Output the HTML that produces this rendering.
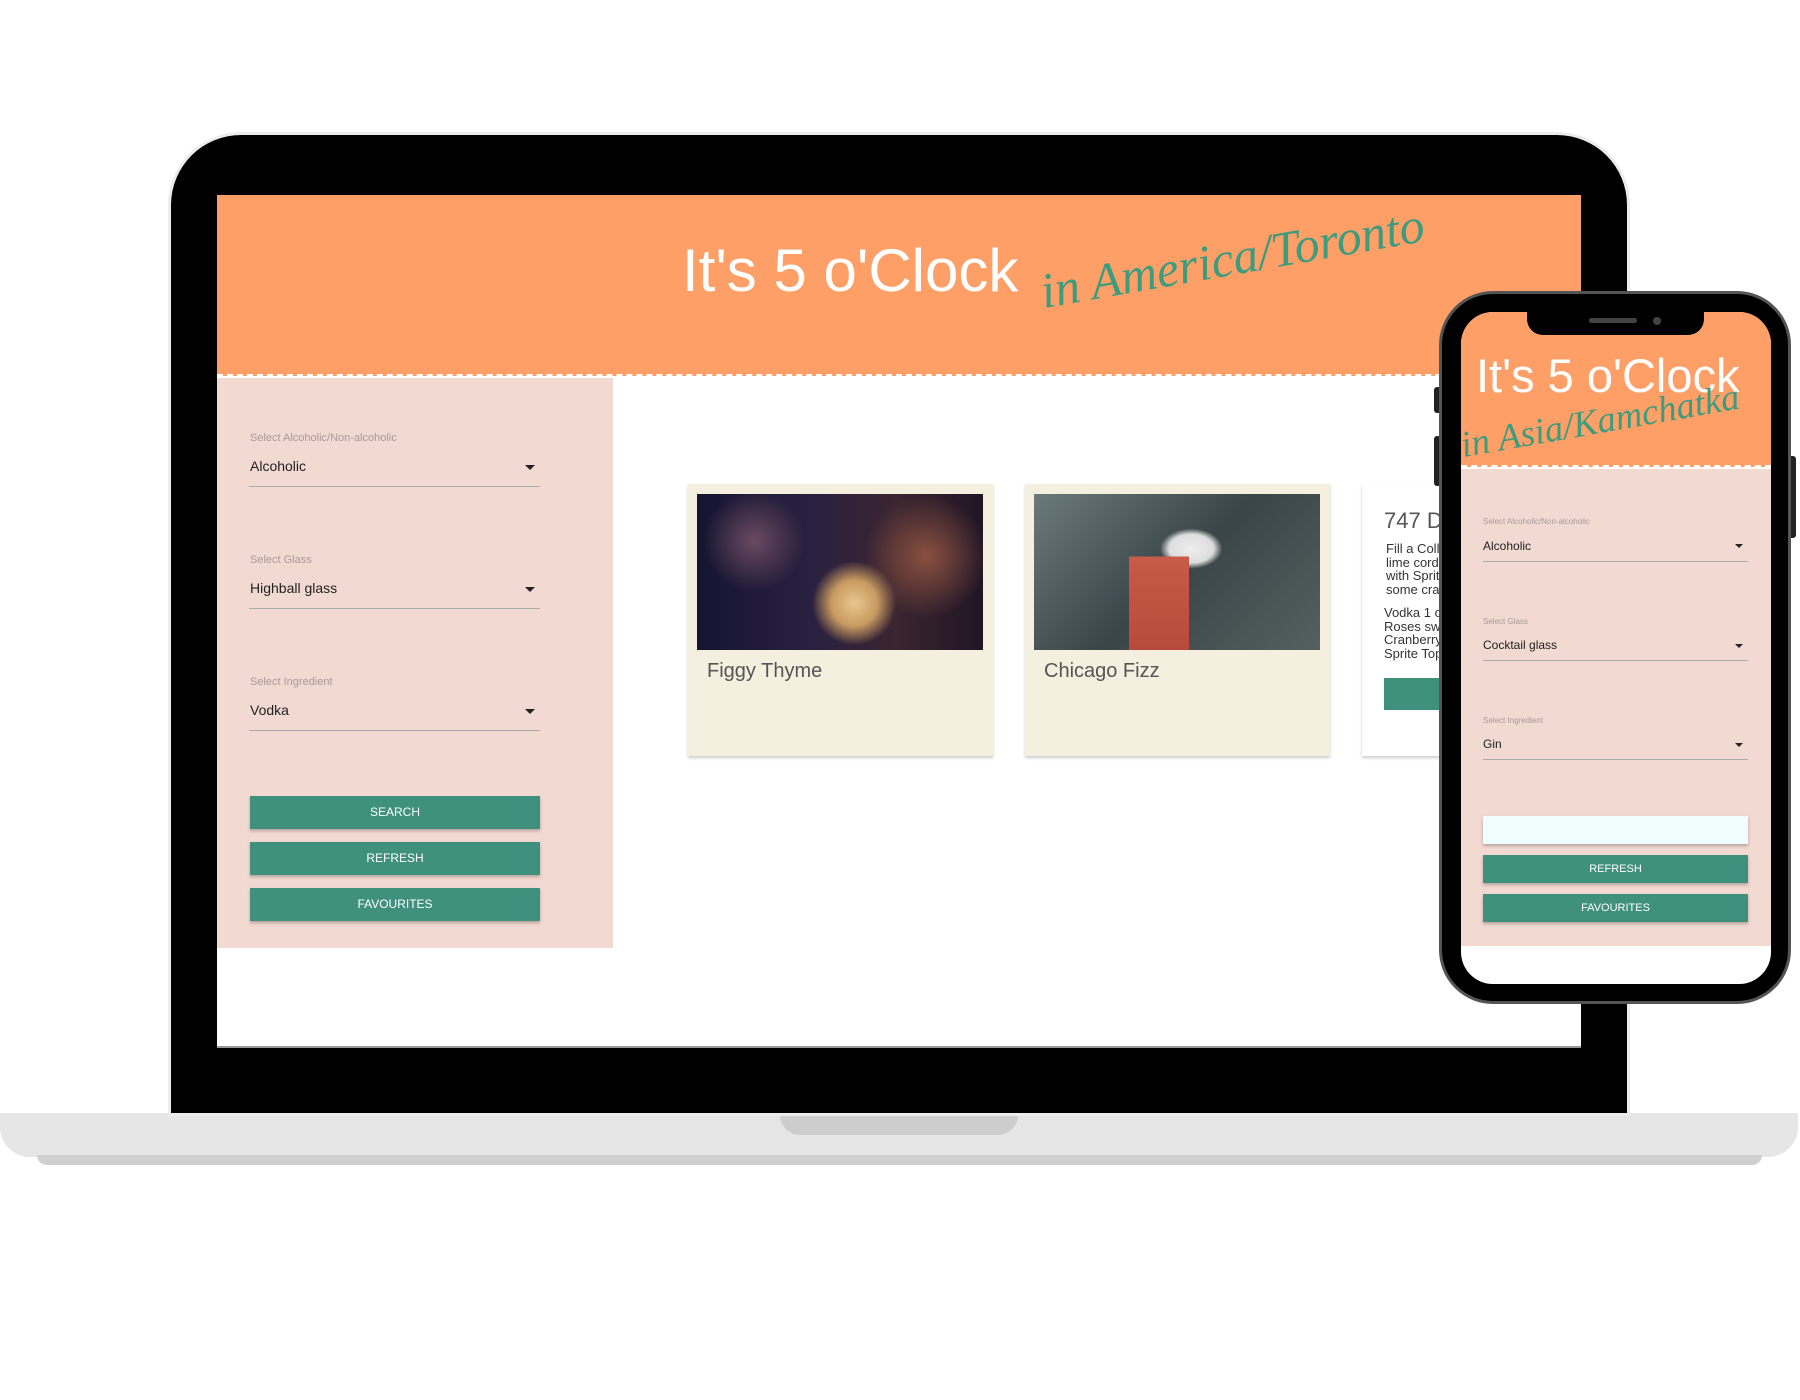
<!DOCTYPE html>
<html><head><meta charset="utf-8"><style>
*{box-sizing:border-box;margin:0;padding:0}
body{width:1800px;height:1400px;background:#fff;position:relative;overflow:hidden;font-family:"Liberation Sans",sans-serif}
.abs{position:absolute}
.title{color:#fff;font-weight:300;white-space:nowrap}
.script{color:#3c9c7e;font-family:"Liberation Serif",serif;font-style:italic;white-space:nowrap;transform-origin:left bottom}
.lbl{font-size:11px;color:#a99;position:absolute}
.val{font-size:14px;color:#222;position:absolute}
.line{position:absolute;height:1px;background:#aaa}
.arr{position:absolute;width:0;height:0;border-left:5px solid transparent;border-right:5px solid transparent;border-top:5px solid #222}
.btn{position:absolute;background:#3f917e;color:#fff;font-size:12px;text-align:center;box-shadow:0 2px 3px rgba(0,0,0,.25)}
.card{position:absolute;background:#f4efde;box-shadow:0 2px 3px rgba(0,0,0,.2)}
</style></head><body>
<!-- laptop -->
<div class="abs" style="left:0;top:1113px;width:1798px;height:44px;background:#e6e6e6;border-radius:0 0 30px 30px"></div>
<div class="abs" style="left:37px;top:1155px;width:1725px;height:10px;background:#cfcfcf;border-radius:0 0 10px 10px"></div>
<div class="abs" style="left:780px;top:1113px;width:238px;height:22px;background:#cdcdcd;border-radius:0 0 20px 20px"></div>
<div class="abs" style="left:171px;top:135px;width:1456px;height:978px;background:#000;border-radius:70px 70px 0 0;box-shadow:0 0 0 3px #ececec"></div>
<div class="abs" style="left:217px;top:195px;width:1364px;height:853px;background:#fff;border-bottom:2px solid #999"></div>
<div class="abs" style="left:217px;top:195px;width:1364px;height:181px;background:#ff9f68;border-bottom:2px dashed #fff"></div>
<div class="abs title" style="left:682px;top:236px;font-size:60px">It's 5 o'Clock</div>
<div class="abs script" style="left:1046px;top:262px;font-size:50px;transform:rotate(-10deg)">in America/Toronto</div>
<div class="abs" style="left:217px;top:378px;width:396px;height:570px;background:#f2d9d2"></div>
<div class="lbl" style="left:250px;top:432px">Select Alcoholic/Non-alcoholic</div>
<div class="val" style="left:250px;top:458px">Alcoholic</div><div class="arr" style="left:525px;top:465px"></div>
<div class="line" style="left:249px;top:486px;width:291px"></div>
<div class="lbl" style="left:250px;top:554px">Select Glass</div>
<div class="val" style="left:250px;top:580px">Highball glass</div><div class="arr" style="left:525px;top:587px"></div>
<div class="line" style="left:249px;top:608px;width:291px"></div>
<div class="lbl" style="left:250px;top:676px">Select Ingredient</div>
<div class="val" style="left:250px;top:702px">Vodka</div><div class="arr" style="left:525px;top:709px"></div>
<div class="line" style="left:249px;top:730px;width:291px"></div>
<div class="btn" style="left:250px;top:796px;width:290px;height:33px;line-height:33px">SEARCH</div>
<div class="btn" style="left:250px;top:842px;width:290px;height:33px;line-height:33px">REFRESH</div>
<div class="btn" style="left:250px;top:888px;width:290px;height:33px;line-height:33px">FAVOURITES</div>
<!-- cards -->
<div class="card" style="left:688px;top:484px;width:305px;height:272px">
<div class="abs" style="left:9px;top:10px;width:286px;height:156px;background:radial-gradient(circle at 20% 30%,#6a4a60 0,transparent 20%),radial-gradient(circle at 55% 70%,#e8c890 0,#c89a60 12%,transparent 22%),radial-gradient(circle at 80% 40%,#8a5040 0,transparent 25%),linear-gradient(90deg,#151530,#2a2040 40%,#3a2530 70%,#201525)"></div>
<div class="abs" style="left:19px;top:176px;font-size:20px;color:#555">Figgy Thyme</div></div>
<div class="card" style="left:1025px;top:484px;width:305px;height:272px">
<div class="abs" style="left:9px;top:10px;width:286px;height:156px;background:linear-gradient(180deg,transparent 0,transparent 40%,#c85a48 40%,#b84a3c 100%) 95px 0/60px 100% no-repeat,radial-gradient(ellipse at 55% 35%,#eee 0,#ddd 10%,transparent 14%),linear-gradient(135deg,#6a7a7a,#3a4548 50%,#556060)"></div>
<div class="abs" style="left:19px;top:176px;font-size:20px;color:#555">Chicago Fizz</div></div>
<div class="card" style="left:1362px;top:484px;width:120px;height:272px;background:#fff;overflow:hidden">
<div class="abs" style="left:22px;top:24px;font-size:22px;color:#555;white-space:nowrap">747 Drink</div>
<div class="abs" style="left:24px;top:58px;font-size:13px;line-height:13.5px;color:#333;white-space:nowrap">Fill a Collins<br>lime cordial<br>with Sprite<br>some cranberry</div>
<div class="abs" style="left:22px;top:122px;font-size:13px;line-height:13.5px;color:#333;white-space:nowrap">Vodka 1 oz<br>Roses sweet<br>Cranberry<br>Sprite Top</div>
<div class="abs" style="left:22px;top:194px;width:100px;height:32px;background:#3f917e"></div></div>
<!-- phone -->
<div class="abs" style="left:1434px;top:387px;width:8px;height:26px;background:#222;border-radius:3px"></div>
<div class="abs" style="left:1434px;top:436px;width:8px;height:50px;background:#222;border-radius:3px"></div>
<div class="abs" style="left:1788px;top:456px;width:8px;height:82px;background:#222;border-radius:3px"></div>
<div class="abs" style="left:1439px;top:291px;width:352px;height:713px;background:#000;border:3px solid #555;border-radius:54px"></div>
<div class="abs" style="left:1461px;top:312px;width:310px;height:672px;background:#fff;border-radius:32px;overflow:hidden">
<div class="abs" style="left:0;top:0;width:310px;height:155px;background:#ff9f68;border-bottom:2px dashed #fff"></div>
<div class="abs title" style="left:15px;top:36px;font-size:47px">It's 5 o'Clock</div>
<div class="abs script" style="left:4px;top:112px;font-size:37px;transform:rotate(-10deg)">in Asia/Kamchatka</div>
<div class="abs" style="left:0;top:157px;width:310px;height:477px;background:#f2d9d2"></div>
<div class="lbl" style="left:22px;top:205px;font-size:8px">Select Alcoholic/Non-alcoholic</div>
<div class="val" style="left:22px;top:227px;font-size:12px">Alcoholic</div><div class="arr" style="left:274px;top:232px;border-width:4px 4px 0"></div>
<div class="line" style="left:22px;top:249px;width:265px"></div>
<div class="lbl" style="left:22px;top:305px;font-size:8px">Select Glass</div>
<div class="val" style="left:22px;top:326px;font-size:12px">Cocktail glass</div><div class="arr" style="left:274px;top:332px;border-width:4px 4px 0"></div>
<div class="line" style="left:22px;top:348px;width:265px"></div>
<div class="lbl" style="left:22px;top:404px;font-size:8px">Select Ingredient</div>
<div class="val" style="left:22px;top:425px;font-size:12px">Gin</div><div class="arr" style="left:274px;top:431px;border-width:4px 4px 0"></div>
<div class="line" style="left:22px;top:447px;width:265px"></div>
<div class="btn" style="left:22px;top:504px;width:265px;height:28px;line-height:28px;background:#effdfd;color:#f4ffff;font-size:11px">SEARCH</div>
<div class="btn" style="left:22px;top:543px;width:265px;height:28px;line-height:28px;font-size:11px">REFRESH</div>
<div class="btn" style="left:22px;top:582px;width:265px;height:28px;line-height:28px;font-size:11px">FAVOURITES</div>
</div>
<div class="abs" style="left:1527px;top:312px;width:177px;height:23px;background:#000;border-radius:0 0 16px 16px"></div>
<div class="abs" style="left:1589px;top:318px;width:48px;height:5px;background:#444;border-radius:3px"></div>
<div class="abs" style="left:1653px;top:317px;width:8px;height:8px;background:#444;border-radius:50%"></div>
</body></html>
